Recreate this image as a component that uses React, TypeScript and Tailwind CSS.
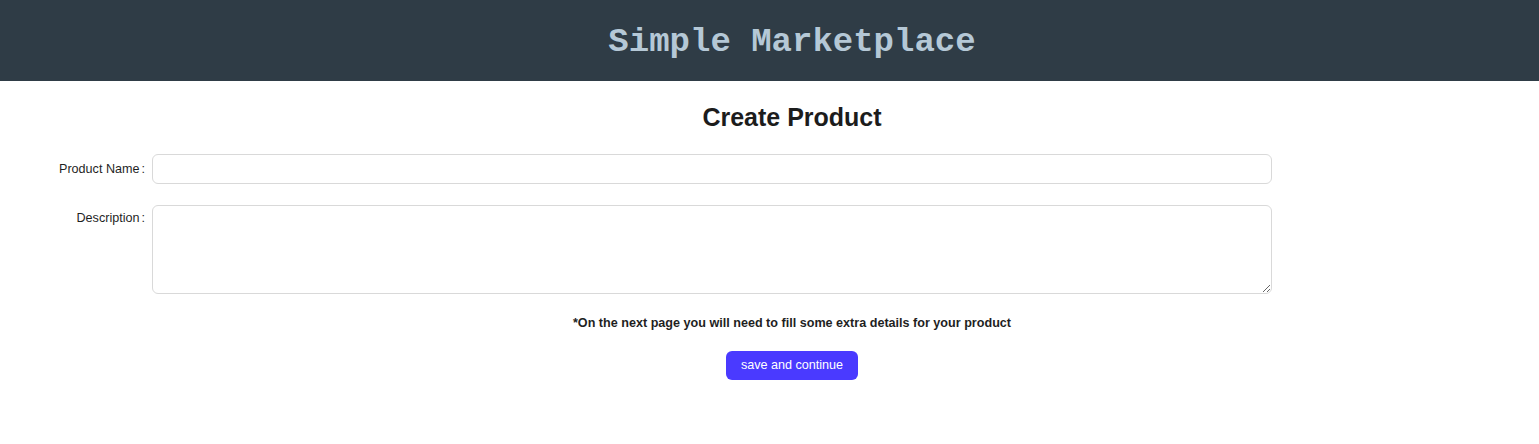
export default function App() {
  return (
    <div className="min-h-[444px] overflow-hidden bg-white" style={{ fontFamily: '"Liberation Sans", Arial, sans-serif' }}>
      {/* the page is laid out on a 1584px wide canvas, wider than the window */}
      <div className="w-[1584px]">
        <header className="flex h-[81px] items-center justify-center bg-[#2f3c46] pt-[4px]">
          <h1 className="text-[34px] font-bold text-[#b5c8d6]" style={{ fontFamily: '"Liberation Mono", monospace' }}>
            Simple Marketplace
          </h1>
        </header>

        <main className="flex flex-col items-center pt-[20px]">
          <h2 className="text-[25px] font-bold leading-[32px] text-[#1c1c1c]">Create Product</h2>

          <form className="mt-[21px] w-full">
            <div className="flex items-start">
              <label className="flex h-[30px] w-[152px] items-center justify-end text-[12.6px] text-[#1f1f1f]">
                Product Name<span className="ml-[2px] mr-[7px]">:</span>
              </label>
              <input
                type="text"
                className="h-[30px] w-[1120px] rounded-[6px] border border-[#d9d9d9] px-[11px] text-[13px] outline-none"
              />
            </div>
            <div className="mt-[21px] flex items-start">
              <label className="flex h-[26px] w-[152px] items-center justify-end text-[12.6px] text-[#1f1f1f]">
                Description<span className="ml-[2px] mr-[7px]">:</span>
              </label>
              <textarea className="h-[89px] w-[1120px] rounded-[6px] border border-[#d9d9d9] px-[11px] py-[4px] text-[13px] outline-none" />
            </div>

            <p className="mt-[20px] text-center text-[12.6px] font-bold text-[#1f1f1f]">
              *On the next page you will need to fill some extra details for your product
            </p>

            <div className="mt-[18px] flex justify-center">
              <button
                type="button"
                className="h-[29px] w-[132px] rounded-[6px] bg-[#4a3aff] pt-[1px] text-[12.6px] text-white"
              >
                save and continue
              </button>
            </div>
          </form>
        </main>
      </div>
    </div>
  )
}
